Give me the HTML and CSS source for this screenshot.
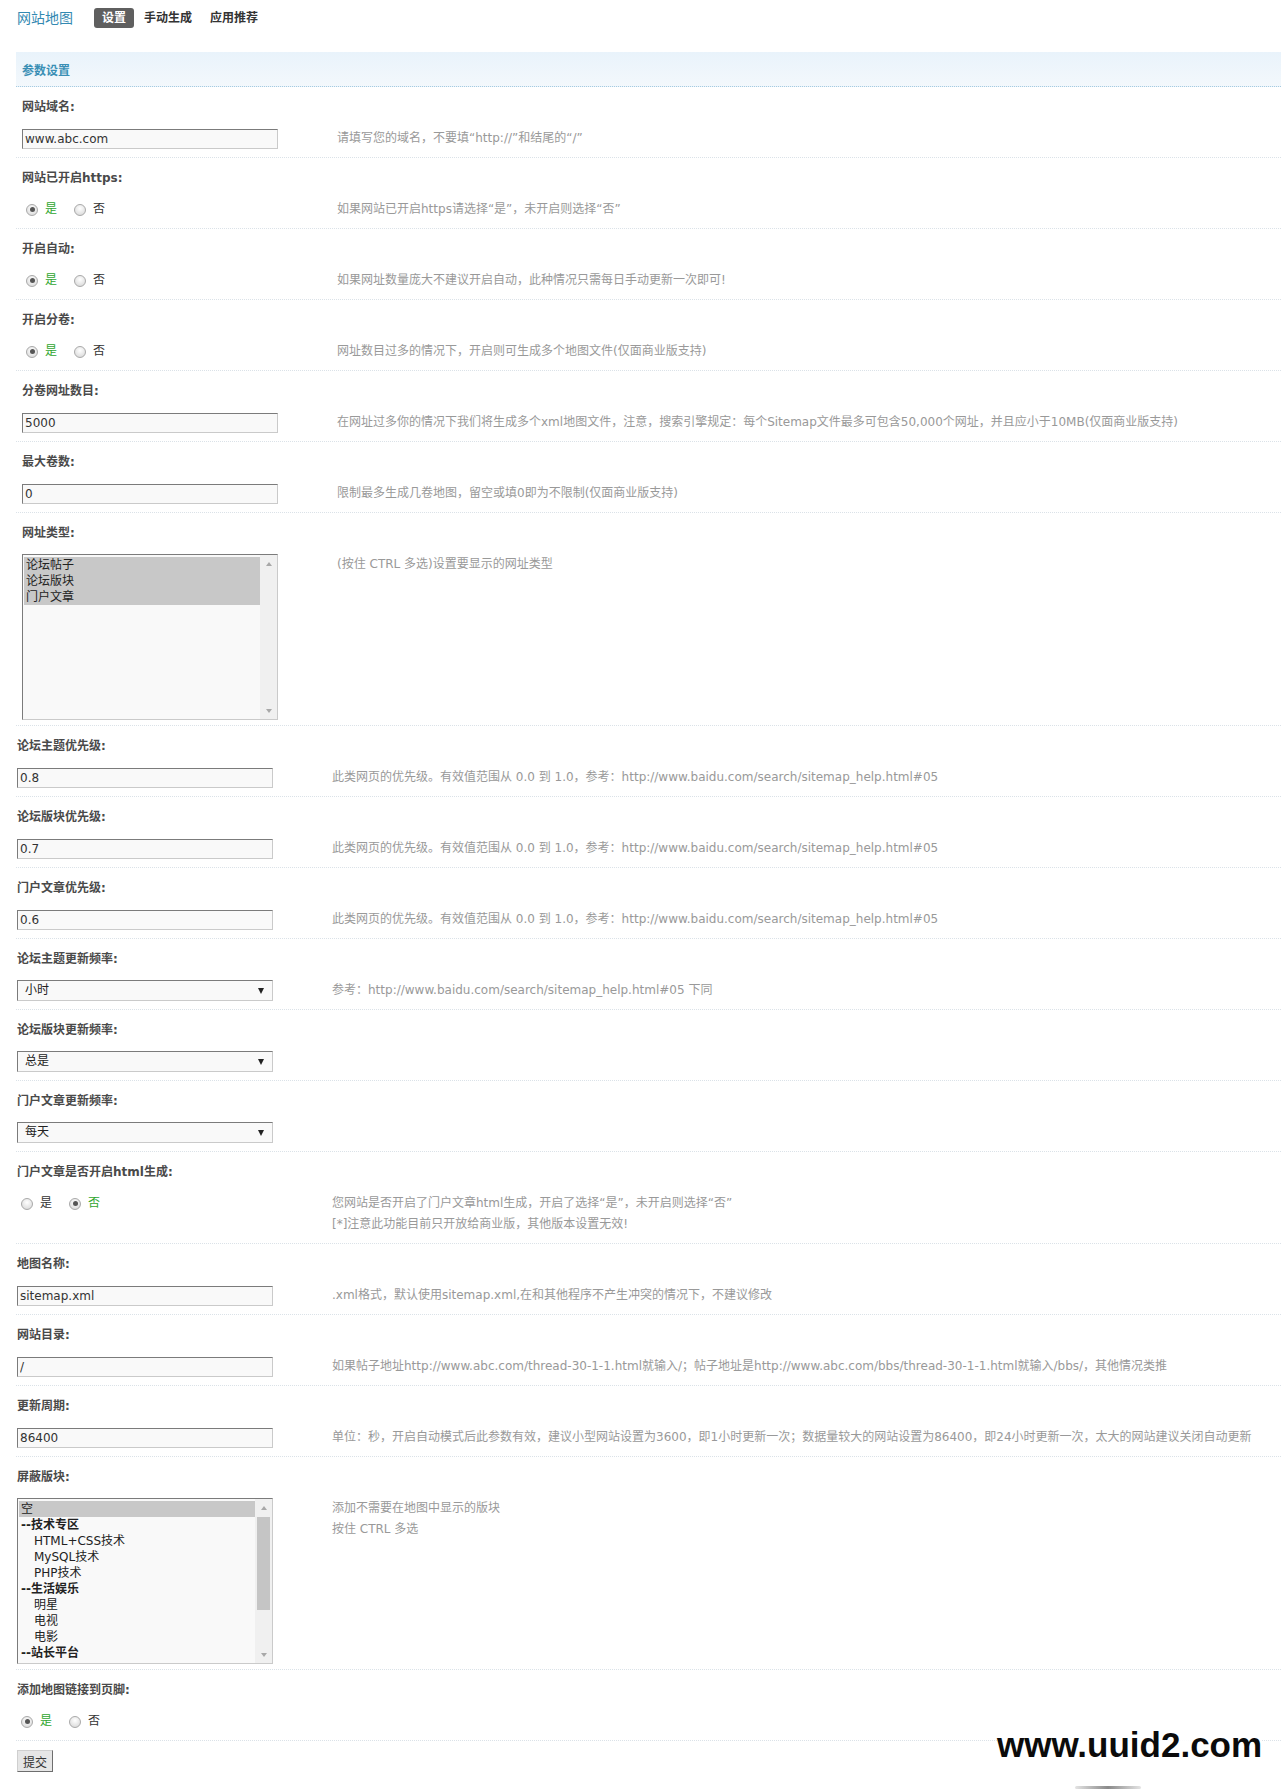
FILE: index.html
```html
<!DOCTYPE html>
<html lang="zh-CN">
<head>
<meta charset="utf-8">
<title>网站地图 - 设置</title>
<link rel="stylesheet" href="styles.css">
</head>
<body>
<div class="page">
  <div class="topbar">
    <h3 class="title">网站地图</h3>
    <ul class="tabs">
      <li class="tab active">设置</li>
      <li class="tab">手动生成</li>
      <li class="tab">应用推荐</li>
    </ul>
  </div>

  <div class="partition">参数设置</div>

  <div class="block b1">
    <div class="item first">
      <div class="lbl">网站域名:</div>
      <div class="row">
        <div class="ctl"><input class="txt" type="text" value="www.abc.com"></div>
        <div class="tip">请填写您的域名，不要填“http://”和结尾的“/”</div>
      </div>
    </div>
    <div class="item">
      <div class="lbl">网站已开启https:</div>
      <div class="row">
        <div class="ctl"><div class="radios"><label class="r on"><span class="dot"></span>是</label><label class="r"><span class="dot"></span>否</label></div></div>
        <div class="tip">如果网站已开启https请选择“是”，未开启则选择“否”</div>
      </div>
    </div>
    <div class="item">
      <div class="lbl">开启自动:</div>
      <div class="row">
        <div class="ctl"><div class="radios"><label class="r on"><span class="dot"></span>是</label><label class="r"><span class="dot"></span>否</label></div></div>
        <div class="tip">如果网址数量庞大不建议开启自动，此种情况只需每日手动更新一次即可!</div>
      </div>
    </div>
    <div class="item">
      <div class="lbl">开启分卷:</div>
      <div class="row">
        <div class="ctl"><div class="radios"><label class="r on"><span class="dot"></span>是</label><label class="r"><span class="dot"></span>否</label></div></div>
        <div class="tip">网址数目过多的情况下，开启则可生成多个地图文件(仅面商业版支持)</div>
      </div>
    </div>
    <div class="item">
      <div class="lbl">分卷网址数目:</div>
      <div class="row">
        <div class="ctl"><input class="txt" type="text" value="5000"></div>
        <div class="tip">在网址过多你的情况下我们将生成多个xml地图文件，注意，搜索引擎规定：每个Sitemap文件最多可包含50,000个网址，并且应小于10MB(仅面商业版支持)</div>
      </div>
    </div>
    <div class="item">
      <div class="lbl">最大卷数:</div>
      <div class="row">
        <div class="ctl"><input class="txt" type="text" value="0"></div>
        <div class="tip">限制最多生成几卷地图，留空或填0即为不限制(仅面商业版支持)</div>
      </div>
    </div>
    <div class="item">
      <div class="lbl">网址类型:</div>
      <div class="row tall">
        <div class="ctl">
          <div class="list">
            <div class="opts">
              <div class="opt sel">论坛帖子</div>
              <div class="opt sel">论坛版块</div>
              <div class="opt sel">门户文章</div>
            </div>
            <div class="sb"><span class="btn"><i class="up"></i></span><span class="track"></span><span class="btn"><i class="down"></i></span></div>
          </div>
        </div>
        <div class="tip">(按住 CTRL 多选)设置要显示的网址类型</div>
      </div>
    </div>
  </div>

  <div class="block b2">
    <div class="item">
      <div class="lbl">论坛主题优先级:</div>
      <div class="row">
        <div class="ctl"><input class="txt" type="text" value="0.8"></div>
        <div class="tip">此类网页的优先级。有效值范围从 0.0 到 1.0，参考：http://www.baidu.com/search/sitemap_help.html#05</div>
      </div>
    </div>
    <div class="item">
      <div class="lbl">论坛版块优先级:</div>
      <div class="row">
        <div class="ctl"><input class="txt" type="text" value="0.7"></div>
        <div class="tip">此类网页的优先级。有效值范围从 0.0 到 1.0，参考：http://www.baidu.com/search/sitemap_help.html#05</div>
      </div>
    </div>
    <div class="item">
      <div class="lbl">门户文章优先级:</div>
      <div class="row">
        <div class="ctl"><input class="txt" type="text" value="0.6"></div>
        <div class="tip">此类网页的优先级。有效值范围从 0.0 到 1.0，参考：http://www.baidu.com/search/sitemap_help.html#05</div>
      </div>
    </div>
    <div class="item">
      <div class="lbl">论坛主题更新频率:</div>
      <div class="row">
        <div class="ctl"><div class="dd"><span>小时</span><i class="caret"></i></div></div>
        <div class="tip">参考：http://www.baidu.com/search/sitemap_help.html#05 下同</div>
      </div>
    </div>
    <div class="item">
      <div class="lbl">论坛版块更新频率:</div>
      <div class="row">
        <div class="ctl"><div class="dd"><span>总是</span><i class="caret"></i></div></div>
        <div class="tip"></div>
      </div>
    </div>
    <div class="item">
      <div class="lbl">门户文章更新频率:</div>
      <div class="row">
        <div class="ctl"><div class="dd"><span>每天</span><i class="caret"></i></div></div>
        <div class="tip"></div>
      </div>
    </div>
    <div class="item">
      <div class="lbl">门户文章是否开启html生成:</div>
      <div class="row">
        <div class="ctl"><div class="radios"><label class="r"><span class="dot"></span>是</label><label class="r on"><span class="dot"></span>否</label></div></div>
        <div class="tip">您网站是否开启了门户文章html生成，开启了选择“是”，未开启则选择“否”<br>[*]注意此功能目前只开放给商业版，其他版本设置无效!</div>
      </div>
    </div>
    <div class="item">
      <div class="lbl">地图名称:</div>
      <div class="row">
        <div class="ctl"><input class="txt" type="text" value="sitemap.xml"></div>
        <div class="tip">.xml格式，默认使用sitemap.xml,在和其他程序不产生冲突的情况下，不建议修改</div>
      </div>
    </div>
    <div class="item">
      <div class="lbl">网站目录:</div>
      <div class="row">
        <div class="ctl"><input class="txt" type="text" value="/"></div>
        <div class="tip">如果帖子地址http://www.abc.com/thread-30-1-1.html就输入/；帖子地址是http://www.abc.com/bbs/thread-30-1-1.html就输入/bbs/，其他情况类推</div>
      </div>
    </div>
    <div class="item">
      <div class="lbl">更新周期:</div>
      <div class="row">
        <div class="ctl"><input class="txt" type="text" value="86400"></div>
        <div class="tip">单位：秒，开启自动模式后此参数有效，建议小型网站设置为3600，即1小时更新一次；数据量较大的网站设置为86400，即24小时更新一次，太大的网站建议关闭自动更新</div>
      </div>
    </div>
    <div class="item">
      <div class="lbl">屏蔽版块:</div>
      <div class="row tall">
        <div class="ctl">
          <div class="list">
            <div class="opts">
              <div class="opt sel">空</div>
              <div class="opt grp">--技术专区</div>
              <div class="opt sub">HTML+CSS技术</div>
              <div class="opt sub">MySQL技术</div>
              <div class="opt sub">PHP技术</div>
              <div class="opt grp">--生活娱乐</div>
              <div class="opt sub">明星</div>
              <div class="opt sub">电视</div>
              <div class="opt sub">电影</div>
              <div class="opt grp">--站长平台</div>
            </div>
            <div class="sb"><span class="btn"><i class="up"></i></span><span class="track"><span class="thumb"></span></span><span class="btn"><i class="down"></i></span></div>
          </div>
        </div>
        <div class="tip">添加不需要在地图中显示的版块<br>按住 CTRL 多选</div>
      </div>
    </div>
    <div class="item">
      <div class="lbl">添加地图链接到页脚:</div>
      <div class="row">
        <div class="ctl"><div class="radios"><label class="r on"><span class="dot"></span>是</label><label class="r"><span class="dot"></span>否</label></div></div>
        <div class="tip"></div>
      </div>
    </div>
    <div class="actions">
      <button class="submit" type="button">提交</button>
    </div>
  </div>

  <div class="watermark">www.uuid2.com</div>
  <div class="shade"></div>
</div>
</body>
</html>
```

FILE: styles.css
```css
* { box-sizing: border-box; }

html, body {
  margin: 0;
  padding: 0;
  background: #fff;
}

body {
  font-family: "DejaVu Sans", "Noto Sans CJK SC", sans-serif;
  font-size: 12px;
  line-height: 21px;
  color: #333;
}

.page {
  position: relative;
  padding: 0 0 19px 16px;
  min-height: 1791px;
}

/* top navigation */
.topbar {
  display: flex;
  align-items: center;
  height: 36px;
  padding-left: 1px;
}

.title {
  margin: 0 21px 0 0;
  font-size: 14px;
  font-weight: 400;
  line-height: 20px;
  color: #3389b2;
}

.tabs {
  display: flex;
  gap: 2px;
  margin: 0;
  padding: 0;
  list-style: none;
}

.tab {
  padding: 0 8px;
  height: 20px;
  line-height: 20px;
  font-weight: 700;
  color: #333;
  border-radius: 3px;
}

.tab.active {
  background: #5f5f5f;
  color: #fff;
}

/* section header */
.partition {
  margin-top: 16px;
  height: 35px;
  padding: 4px 0 0 6px;
  line-height: 30px;
  font-weight: 700;
  color: #3a8fb5;
  background: linear-gradient(#e9f3fb, #f3f8fc);
  border-bottom: 1px dotted #a7cbe0;
}

/* setting items */
.item {
  border-top: 1px dotted #dbe2e8;
}

.item.first {
  border-top: none;
}

.b1 .item { padding-left: 6px; }
.b2 .item { padding-left: 1px; }

.lbl {
  height: 29px;
  padding-top: 11px;
  line-height: 18px;
  font-weight: 700;
  color: #4a4a4a;
}

.row {
  display: flex;
  align-items: flex-start;
  padding: 12px 0 8px;
}

.row.tall {
  padding: 12px 0 5px;
}

.ctl {
  flex: none;
  width: 315px;
  min-height: 21px;
  display: flex;
  align-items: center;
}

.tip {
  color: #999;
  line-height: 21px;
  white-space: nowrap;
}

/* text inputs */
.txt {
  width: 256px;
  height: 20px;
  margin: 0;
  padding: 0 2px;
  border: 1px solid;
  border-color: #7b7b7b #cacaca #cacaca #7b7b7b;
  background: #f9f9f9;
  font-family: "DejaVu Sans", "Noto Sans CJK SC", sans-serif;
  font-size: 12px;
  color: #333;
  outline: none;
}

/* radios */
.radios {
  display: flex;
  align-items: center;
  padding-left: 4px;
}

.r {
  display: flex;
  align-items: center;
  gap: 7px;
  margin-right: 17px;
  color: #333;
  line-height: 21px;
}

.r.on { color: #2fa62f; }

.dot {
  position: relative;
  width: 12px;
  height: 12px;
  border-radius: 50%;
  border: 1px solid #a9a9a9;
  background: radial-gradient(circle at 50% 35%, #ffffff, #d4d4d4);
}

.r.on .dot::after {
  content: "";
  position: absolute;
  left: 2.5px;
  top: 2.5px;
  width: 5px;
  height: 5px;
  border-radius: 50%;
  background: #555;
}

/* dropdowns */
.dd {
  width: 256px;
  height: 21px;
  display: flex;
  align-items: center;
  justify-content: space-between;
  padding: 0 8px 0 7px;
  border: 1px solid;
  border-color: #7b7b7b #cacaca #cacaca #7b7b7b;
  background: #f9f9f9;
  color: #222;
}

.caret {
  width: 0;
  height: 0;
  border-left: 3.5px solid transparent;
  border-right: 3.5px solid transparent;
  border-top: 6px solid #222;
}

/* list boxes */
.list {
  width: 256px;
  height: 166px;
  display: flex;
  border: 1px solid;
  border-color: #7b7b7b #cacaca #cacaca #7b7b7b;
  background: #f9f9f9;
}

.opts {
  flex: 1;
  padding: 2px 0 0 1px;
}

.opt {
  height: 16px;
  line-height: 16px;
  padding-left: 2px;
  color: #222;
  white-space: nowrap;
}

.opt.sel { background: #c8c8c8; }
.opt.grp { font-weight: 700; padding-left: 2px; }
.opt.sub { padding-left: 15px; }

.sb {
  flex: none;
  width: 17px;
  display: flex;
  flex-direction: column;
  background: #f0f0f0;
}

.sb .btn {
  height: 17px;
  display: flex;
  align-items: center;
  justify-content: center;
}

.sb .track {
  flex: 1;
  padding: 1px 2px;
}

.sb .thumb {
  display: block;
  height: 93px;
  background: #c5c5c5;
}

.up, .down {
  width: 0;
  height: 0;
  border-left: 3.5px solid transparent;
  border-right: 3.5px solid transparent;
}

.up { border-bottom: 4px solid #a8a8a8; }
.down { border-top: 4px solid #a8a8a8; }

/* submit */
.actions {
  border-top: 1px dotted #dbe2e8;
  padding: 9px 0 0 1px;
}

.submit {
  width: 36px;
  height: 22px;
  margin: 0;
  padding: 0;
  border: 1px solid;
  border-color: #cfcfcf #6e6e6e #6e6e6e #cfcfcf;
  background: #e6e6e6;
  font-family: "DejaVu Sans", "Noto Sans CJK SC", sans-serif;
  font-size: 12px;
  color: #333;
}

/* overlay watermark */
.watermark {
  position: absolute;
  left: 997px;
  top: 1725px;
  font-family: "Liberation Sans", Arial, sans-serif;
  font-size: 35px;
  font-weight: 700;
  line-height: 40px;
  color: #0b0b0b;
  background: rgba(255, 255, 255, 0.9);
}

.shade {
  position: absolute;
  left: 1075px;
  top: 1786px;
  width: 66px;
  height: 3px;
  border-radius: 2px;
  background: linear-gradient(to right, rgba(120,120,120,0.2), #8a8a8a 50%, rgba(120,120,120,0.2));
}
```
